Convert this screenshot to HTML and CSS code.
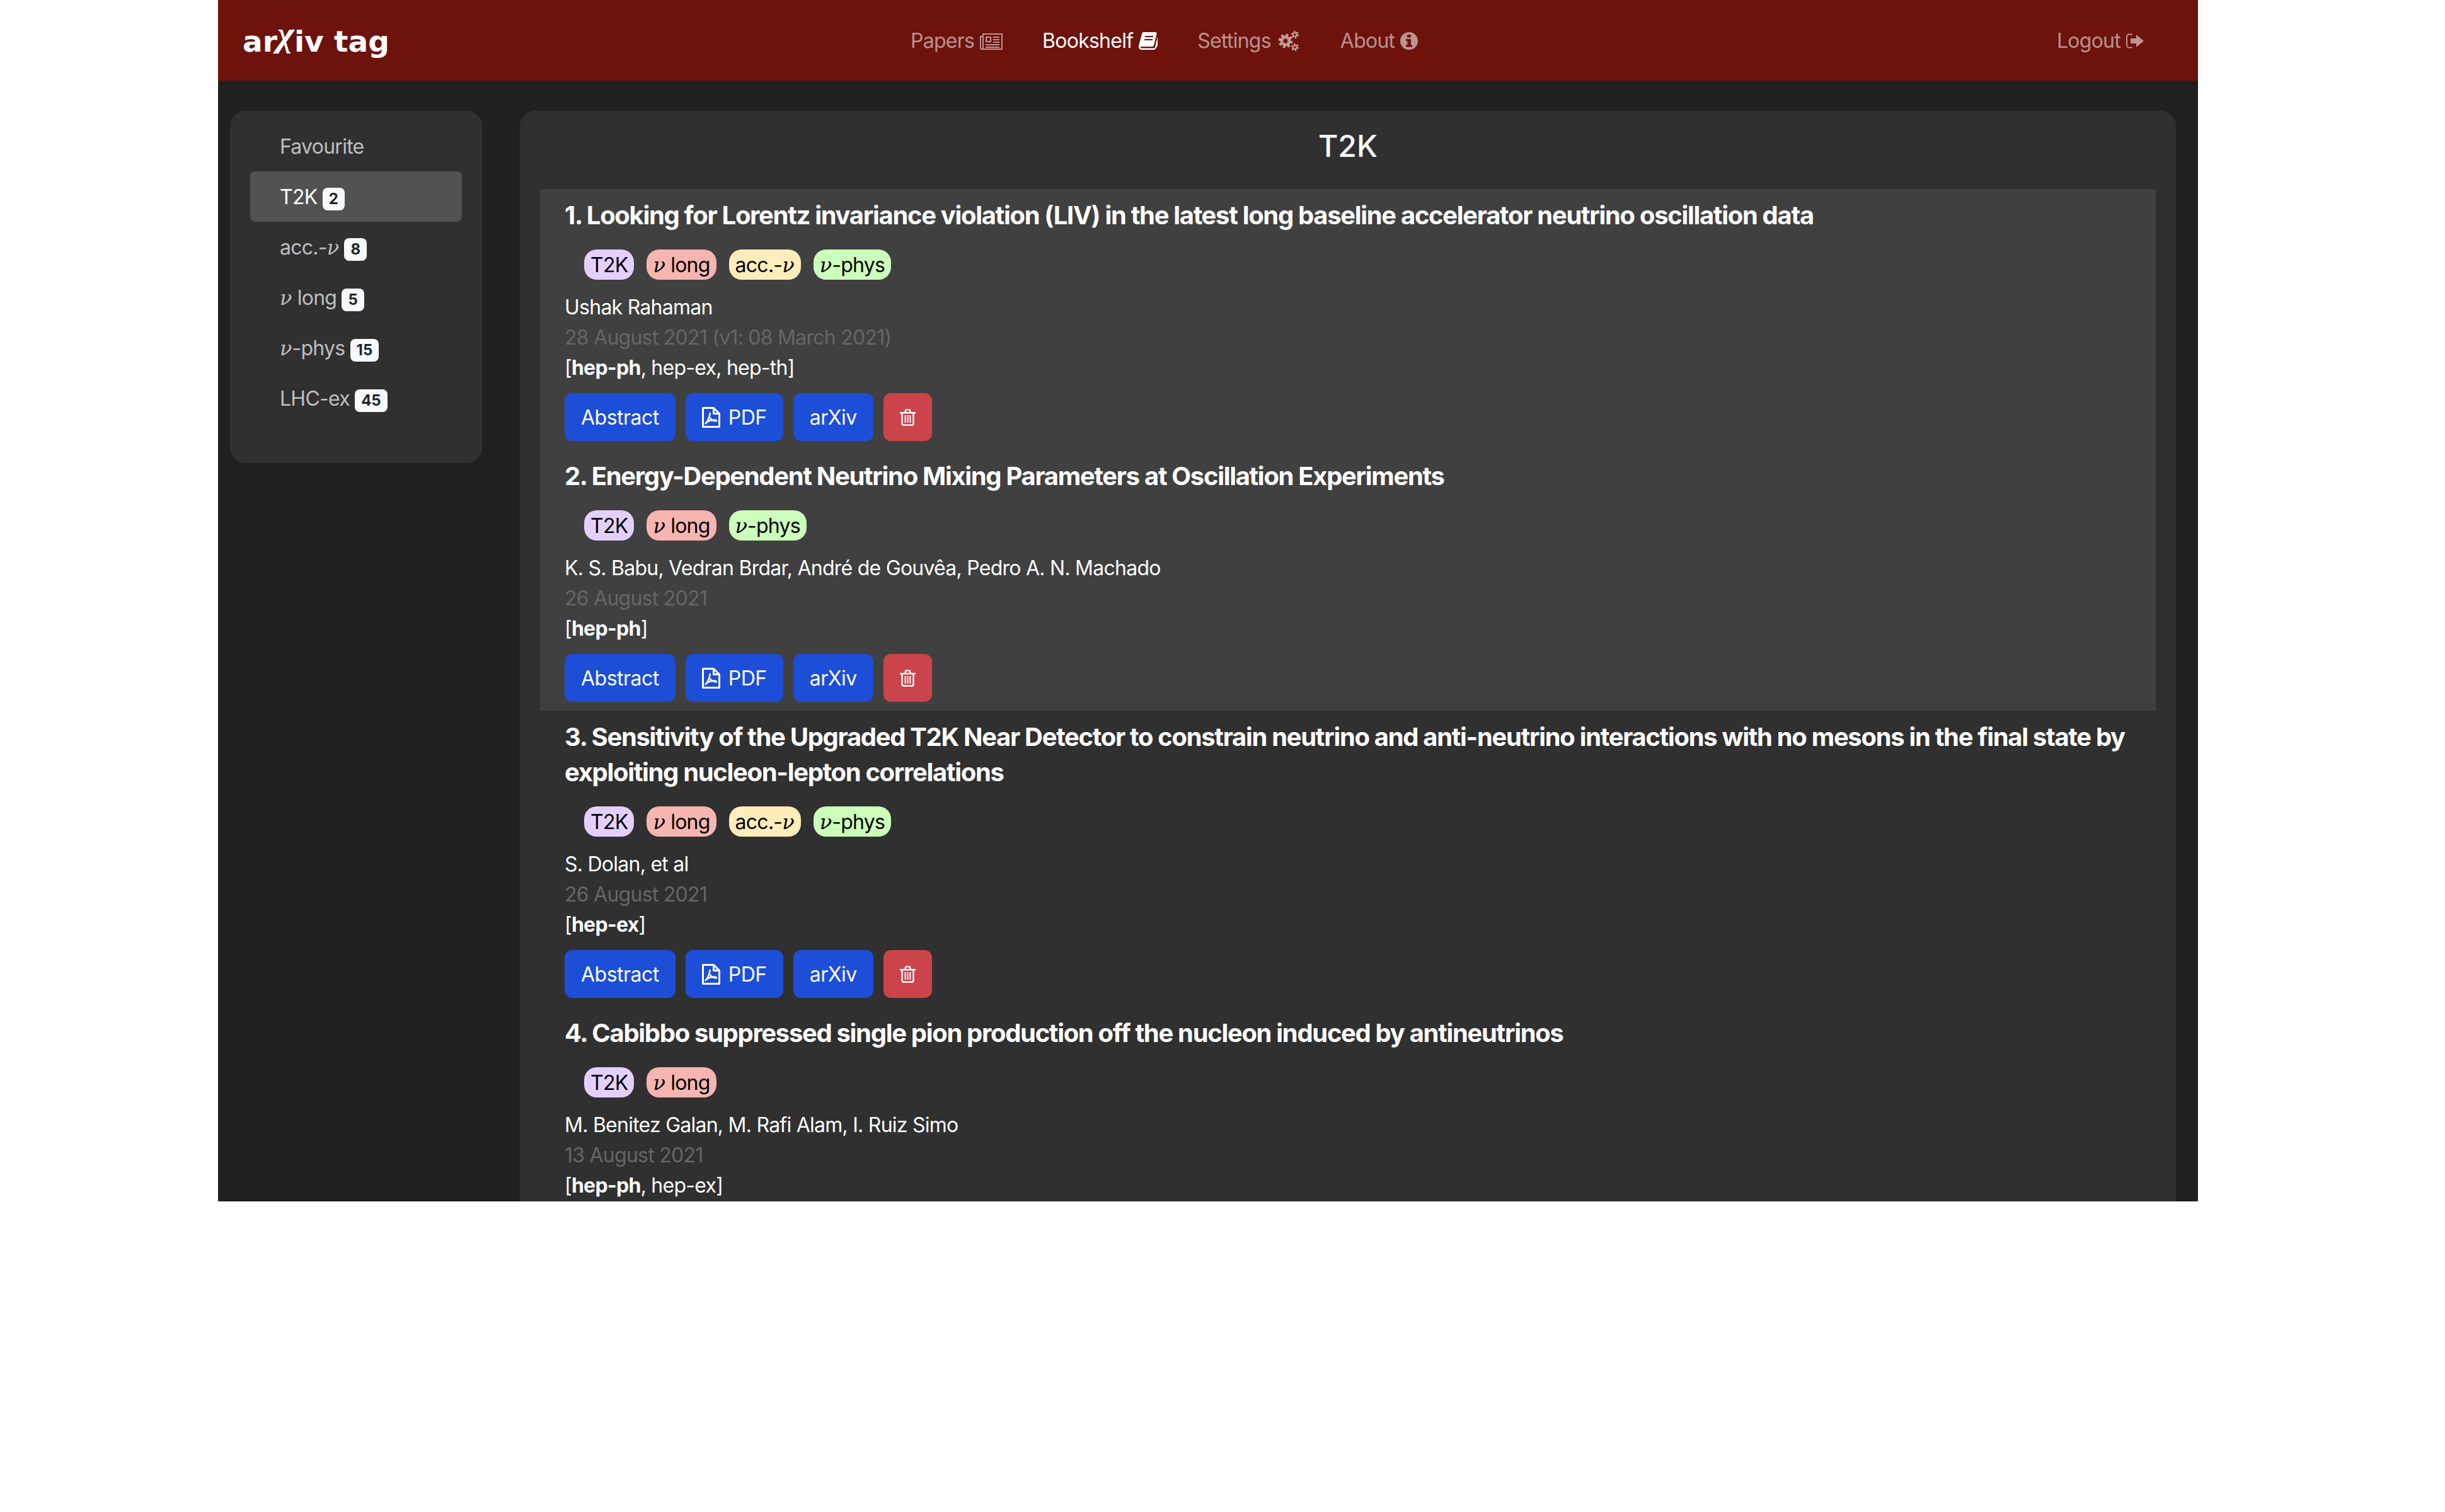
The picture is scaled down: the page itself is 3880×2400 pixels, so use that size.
FILE: index.html
```html
<!DOCTYPE html>
<html lang="en">
<head>
  <meta charset="UTF-8">
  <title>arXiv tag</title>
  <link rel="stylesheet" href="styles.css">
</head>
<body>

  <svg class="sprites" width="0" height="0">
    <symbol id="i-news" viewBox="0 0 36 28">
      <path fill="none" stroke="currentColor" stroke-width="2" d="M5 3h30v24H3a2 2 0 0 1-2-2V7h4zM5 7v19"/>
      <path fill="currentColor" d="M9 7h9v9H9zM21 7h10v2H21zM21 11h10v2H21zM21 15h10v2H21zM9 19h22v2H9zM9 23h22v2H9z"/>
      <path fill="#6d130c" d="M11 9h5v5h-5z"/>
    </symbol>
    <symbol id="i-book" viewBox="0 0 30 28">
      <path fill="currentColor" d="M8 0h18c2 0 3 1 2.400 3L24 21c-.4 1.500-1.500 2-3 2H5c-2 0-2.500 1-2 1.700.4.600 1 .8 2 .8h19c1 0 1.600-.5 1.800-1.300L30 7v14.500L27 26c-.5 1.300-1.500 2-3 2H5c-3 0-5-2-5-5 0-1 .2-2 .5-3L5 3c.5-2 1.500-3 3-3z"/>
      <path fill="#6d130c" d="M10 6h13v2H10zM9 11h13v2H9z"/>
    </symbol>
    <symbol id="i-cogs" viewBox="0 0 34 32">
      <g fill="none" stroke="currentColor">
        <circle cx="12" cy="16" r="6" stroke-width="5"/>
        <circle cx="12" cy="16" r="9.500" stroke-width="4" stroke-dasharray="4 3.460"/>
        <circle cx="27" cy="6" r="3" stroke-width="2.500"/>
        <circle cx="27" cy="6" r="5" stroke-width="2.500" stroke-dasharray="2.500 2.740"/>
        <circle cx="27" cy="26" r="3" stroke-width="2.500"/>
        <circle cx="27" cy="26" r="5" stroke-width="2.500" stroke-dasharray="2.500 2.740"/>
      </g>
    </symbol>
    <symbol id="i-info" viewBox="0 0 28 28">
      <path fill="currentColor" fill-rule="evenodd" d="M14 0a14 14 0 1 1 0 28a14 14 0 0 1 0-28zM11 4v4.500h6V4zM9 11v3h2.500v6H9v3.500h10V20h-2v-9z"/>
    </symbol>
    <symbol id="i-logout" viewBox="0 0 28 24">
      <path fill="none" stroke="currentColor" stroke-width="2" stroke-linecap="round" d="M9 1.500H5a4 4 0 0 0-4 4v13a4 4 0 0 0 4 4h4"/>
      <path fill="currentColor" d="M16 2l12 10-12 10v-6H7V8h9z"/>
    </symbol>
    <symbol id="i-pdf" viewBox="0 0 29 33">
      <path fill="none" stroke="currentColor" stroke-width="3" stroke-linejoin="round" d="M1.500 1.500h17l9 9v21h-26zM18.500 1.500v9h9"/>
      <path fill="none" stroke="currentColor" stroke-width="2.500" d="M13 9c-1 7-3 13-8 18M13 17c2 4 6 6 11 5M8 24c4-3 9-4 15-3"/>
    </symbol>
    <symbol id="i-trash" viewBox="0 0 25 27">
      <path fill="none" stroke="currentColor" stroke-width="2.400" stroke-linejoin="round" d="M0 6.200h25M3.500 6.200v17.300a2.300 2.300 0 0 0 2.300 2.300h13.400a2.300 2.300 0 0 0 2.300-2.300V6.200M8 6.200l1.500-4.800h6L17 6.200"/>
      <path fill="currentColor" d="M7.600 10h2v12h-2zM11.500 10h2v12h-2zM15.400 10h2v12h-2z"/>
    </symbol>
  </svg>

  <div class="app">
    <nav class="navbar">
      <a class="brand">ar<i>χ</i>iv tag</a>
      <div class="nav-links">
        <a class="nav-link">Papers <svg class="nav-icon news"><use href="#i-news"/></svg></a>
        <a class="nav-link active">Bookshelf <svg class="nav-icon book"><use href="#i-book"/></svg></a>
        <a class="nav-link">Settings <svg class="nav-icon cogs"><use href="#i-cogs"/></svg></a>
        <a class="nav-link">About <svg class="nav-icon info"><use href="#i-info"/></svg></a>
      </div>
      <a class="nav-link logout">Logout <svg class="nav-icon exit"><use href="#i-logout"/></svg></a>
    </nav>

    <div class="layout">
      <aside class="sidebar">
        <a class="side-item">Favourite</a>
        <a class="side-item active">T2K <span class="badge">2</span></a>
        <a class="side-item">acc.-<i class="nu">ν</i> <span class="badge">8</span></a>
        <a class="side-item"><i class="nu">ν</i> long <span class="badge">5</span></a>
        <a class="side-item"><i class="nu">ν</i>-phys <span class="badge">15</span></a>
        <a class="side-item">LHC-ex <span class="badge">45</span></a>
      </aside>

      <main class="shelf">
        <h2 class="shelf-title">T2K</h2>

        <article class="paper highlight">
          <h3 class="paper-title">1. Looking for Lorentz invariance violation (LIV) in the latest long baseline accelerator neutrino oscillation data</h3>
          <div class="tags">
            <span class="tag purple">T2K</span>
            <span class="tag red"><i class="nu">ν</i> long</span>
            <span class="tag yellow">acc.-<i class="nu">ν</i></span>
            <span class="tag green"><i class="nu">ν</i>-phys</span>
          </div>
          <div class="meta">Ushak Rahaman</div>
          <div class="meta date">28 August 2021 (v1: 08 March 2021)</div>
          <div class="meta">[<b>hep-ph</b>, hep-ex, hep-th]</div>
          <div class="actions">
            <a class="btn">Abstract</a>
            <a class="btn"><svg class="pdf-icon"><use href="#i-pdf"/></svg>PDF</a>
            <a class="btn">arXiv</a>
            <a class="btn danger"><svg class="trash-icon"><use href="#i-trash"/></svg></a>
          </div>
        </article>

        <article class="paper highlight">
          <h3 class="paper-title">2. Energy-Dependent Neutrino Mixing Parameters at Oscillation Experiments</h3>
          <div class="tags">
            <span class="tag purple">T2K</span>
            <span class="tag red"><i class="nu">ν</i> long</span>
            <span class="tag green"><i class="nu">ν</i>-phys</span>
          </div>
          <div class="meta">K. S. Babu, Vedran Brdar, André de Gouvêa, Pedro A. N. Machado</div>
          <div class="meta date">26 August 2021</div>
          <div class="meta">[<b>hep-ph</b>]</div>
          <div class="actions">
            <a class="btn">Abstract</a>
            <a class="btn"><svg class="pdf-icon"><use href="#i-pdf"/></svg>PDF</a>
            <a class="btn">arXiv</a>
            <a class="btn danger"><svg class="trash-icon"><use href="#i-trash"/></svg></a>
          </div>
        </article>

        <article class="paper">
          <h3 class="paper-title">3. Sensitivity of the Upgraded T2K Near Detector to constrain neutrino and anti-neutrino interactions with no mesons in the final state by exploiting nucleon-lepton correlations</h3>
          <div class="tags">
            <span class="tag purple">T2K</span>
            <span class="tag red"><i class="nu">ν</i> long</span>
            <span class="tag yellow">acc.-<i class="nu">ν</i></span>
            <span class="tag green"><i class="nu">ν</i>-phys</span>
          </div>
          <div class="meta">S. Dolan, et al</div>
          <div class="meta date">26 August 2021</div>
          <div class="meta">[<b>hep-ex</b>]</div>
          <div class="actions">
            <a class="btn">Abstract</a>
            <a class="btn"><svg class="pdf-icon"><use href="#i-pdf"/></svg>PDF</a>
            <a class="btn">arXiv</a>
            <a class="btn danger"><svg class="trash-icon"><use href="#i-trash"/></svg></a>
          </div>
        </article>

        <article class="paper">
          <h3 class="paper-title">4. Cabibbo suppressed single pion production off the nucleon induced by antineutrinos</h3>
          <div class="tags">
            <span class="tag purple">T2K</span>
            <span class="tag red"><i class="nu">ν</i> long</span>
          </div>
          <div class="meta">M. Benitez Galan, M. Rafi Alam, I. Ruiz Simo</div>
          <div class="meta date">13 August 2021</div>
          <div class="meta">[<b>hep-ph</b>, hep-ex]</div>
        </article>
      </main>
    </div>
  </div>

</body>
</html>
```

FILE: styles.css
```css
body {
  margin: 0;
  background: #fff;
  font-family: Inter, "Noto Sans", sans-serif;
  font-size: 32px;
  line-height: 48px;
  letter-spacing: -0.75px;
}

.sprites {
  display: block;
  height: 0;
}

.app {
  width: 3142px;
  height: 1907px;
  margin-left: 346px;
  background-color: #202020;
  color: #fff;
  overflow: hidden;
}

.navbar {
  display: flex;
  align-items: center;
  height: 128px;
  background-color: #6d130c;
}

.brand {
  margin-left: 39px;
  width: 229px;
  font-family: "DejaVu Sans", sans-serif;
  font-size: 47px;
  font-weight: bold;
  line-height: 132px;
  height: 128px;
  letter-spacing: 0;
  color: #fff;
  white-space: nowrap;
}

.brand i {
  font-family: "Liberation Serif", serif;
  font-size: 58px;
  line-height: 1;
  vertical-align: 9px;
}

.nav-links {
  display: flex;
  margin-left: 815px;
  gap: 31px;
  padding-top: 1px;
}

.nav-link {
  display: flex;
  align-items: center;
  gap: 9px;
  padding: 0 16px;
  color: rgba(255, 255, 255, 0.55);
}

.nav-link.active {
  color: #fff;
}

.logout {
  margin-left: auto;
  margin-right: 70px;
  padding-top: 1px;
}

.nav-icon {
  display: block;
}

.news { width: 36px; height: 28px; }
.book { width: 30px; height: 28px; }
.cogs { width: 38px; height: 32px; }
.info { width: 28px; height: 28px; }
.exit { width: 28px; height: 24px; }

.layout {
  display: flex;
  align-items: flex-start;
  gap: 60px;
  padding: 48px 35px 0 19px;
}

.sidebar {
  width: 400px;
  height: 559px;
  box-sizing: border-box;
  padding: 16px 32px;
  background-color: #303030;
  border-radius: 24px;
  flex-shrink: 0;
}

.side-item {
  display: block;
  height: 80px;
  box-sizing: border-box;
  padding: 17px 47px 15px;
  line-height: 48px;
  border-radius: 8px;
  color: rgba(255, 255, 255, 0.7);
  white-space: nowrap;
}

.side-item.active {
  background-color: #525252;
  color: #fff;
}

.nu {
  font-family: "DejaVu Serif", serif;
  font-style: italic;
  line-height: 1;
  letter-spacing: 0;
}

.badge {
  display: inline-block;
  padding: 6px 10px;
  font-size: 24px;
  font-weight: 700;
  line-height: 24px;
  letter-spacing: 0;
  color: #212529;
  background-color: #f8f9fa;
  border-radius: 8px;
}

.shelf {
  flex: 1;
  min-height: 1800px;
  padding: 0 32px;
  background-color: #303030;
  border-radius: 24px 24px 0 0;
}

.shelf-title {
  margin: 0;
  height: 124px;
  box-sizing: border-box;
  padding-top: 28px;
  font-size: 48px;
  font-weight: 500;
  line-height: 56px;
  letter-spacing: 0;
  text-align: center;
}

.paper {
  padding: 14px 40px 14px 39px;
}

.highlight {
  background-color: #404040;
}

.paper-title {
  margin: 0;
  font-size: 40px;
  font-weight: 700;
  line-height: 56px;
  letter-spacing: -1.33px;
}

.tags {
  display: flex;
  gap: 20px;
  margin: 26px 0 20px 31px;
}

.tag {
  height: 48px;
  padding: 0 10px;
  border-radius: 20px;
  line-height: 50px;
  color: #000;
}

.purple { background-color: #e4d0ff; }
.red { background-color: #f6b5b0; }
.yellow { background-color: #ffeebb; }
.green { background-color: #ccffbb; }

.date {
  color: #666;
}

.actions {
  display: flex;
  gap: 16px;
  margin-top: 16px;
}

.btn {
  display: flex;
  align-items: center;
  gap: 13px;
  height: 76px;
  padding: 1px 26px 0;
  box-sizing: border-box;
  background-color: #1d4ed8;
  border-radius: 12px;
  letter-spacing: -0.5px;
}

.btn.danger {
  background-color: #cc444b;
}

.pdf-icon {
  width: 29px;
  height: 33px;
}

.trash-icon {
  width: 25px;
  height: 27px;
}
```
